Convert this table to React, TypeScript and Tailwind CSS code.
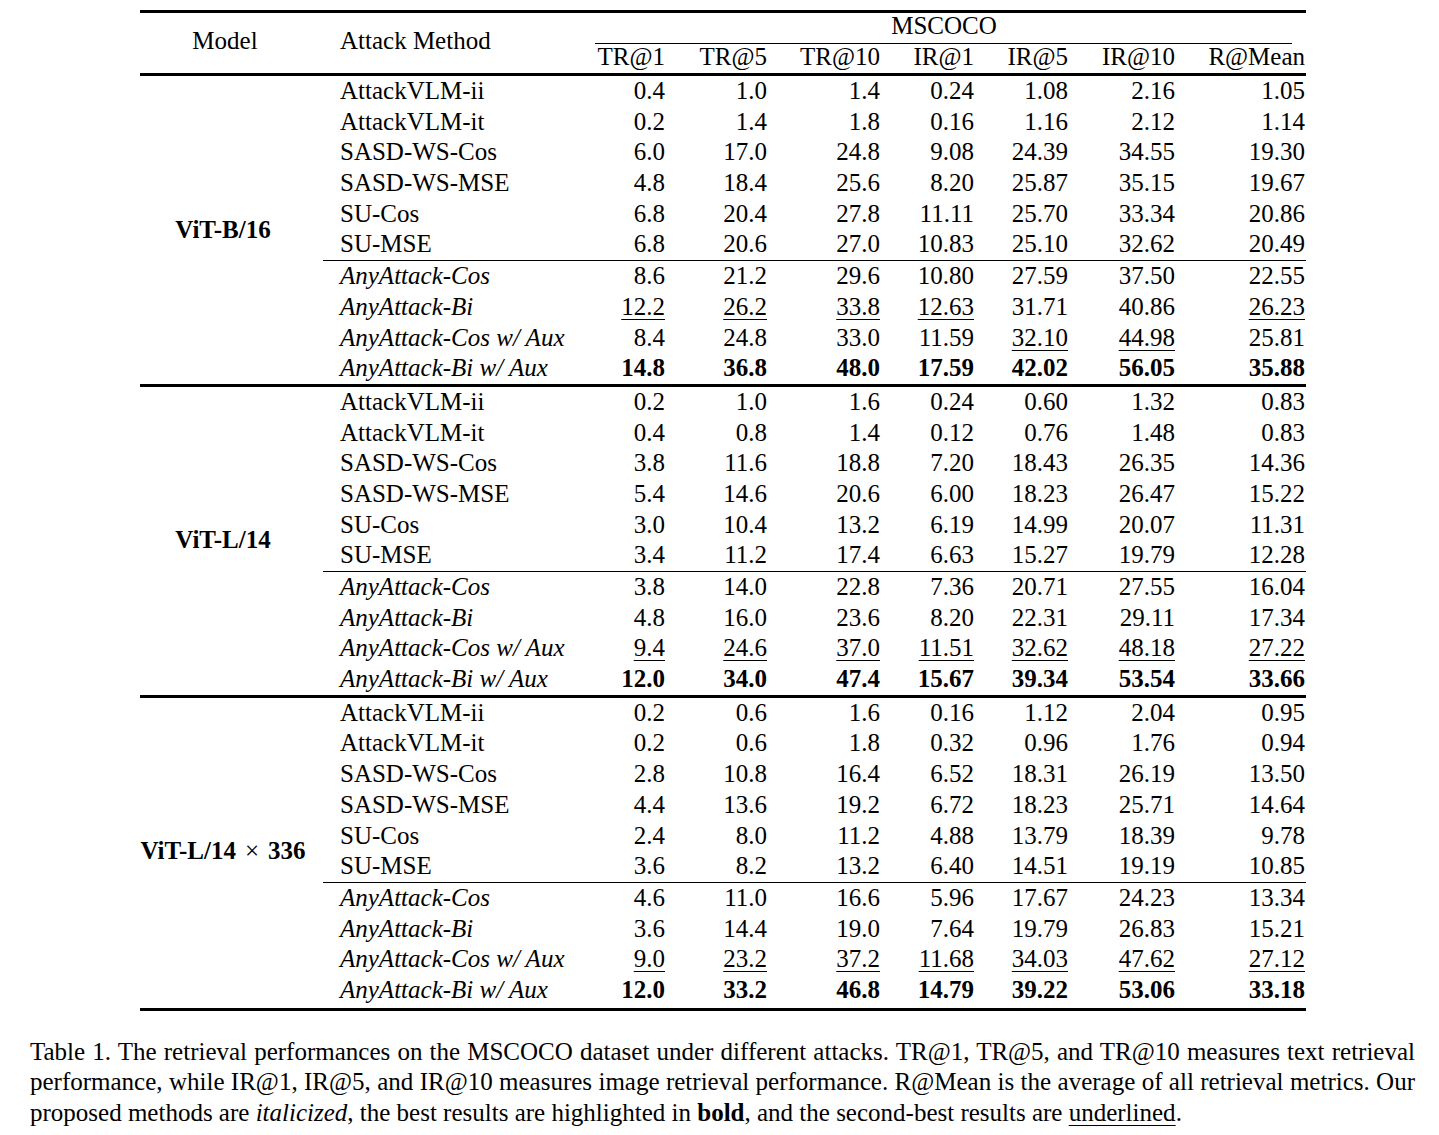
import React from "react";

type Cell = string;
type Row = { name: string; italic?: boolean; vals: Cell[] };
type Group = { model: React.ReactNode; rows: Row[] };

const widths = ["w-[100px] pr-[17px]", "w-[102px] pr-[17px]", "w-[113px] pr-[17px]", "w-[94px] pr-[17px]", "w-[94px] pr-[17px]", "w-[107px] pr-[17px]", "w-[114px] pr-[1px]"];

const g1: Row[] = [
  { name: "AttackVLM-ii", vals: ["0.4", "1.0", "1.4", "0.24", "1.08", "2.16", "1.05"] },
  { name: "AttackVLM-it", vals: ["0.2", "1.4", "1.8", "0.16", "1.16", "2.12", "1.14"] },
  { name: "SASD-WS-Cos", vals: ["6.0", "17.0", "24.8", "9.08", "24.39", "34.55", "19.30"] },
  { name: "SASD-WS-MSE", vals: ["4.8", "18.4", "25.6", "8.20", "25.87", "35.15", "19.67"] },
  { name: "SU-Cos", vals: ["6.8", "20.4", "27.8", "11.11", "25.70", "33.34", "20.86"] },
  { name: "SU-MSE", vals: ["6.8", "20.6", "27.0", "10.83", "25.10", "32.62", "20.49"] },
  { name: "AnyAttack-Cos", italic: true, vals: ["8.6", "21.2", "29.6", "10.80", "27.59", "37.50", "22.55"] },
  { name: "AnyAttack-Bi", italic: true, vals: ["_12.2", "_26.2", "_33.8", "_12.63", "31.71", "40.86", "_26.23"] },
  { name: "AnyAttack-Cos w/ Aux", italic: true, vals: ["8.4", "24.8", "33.0", "11.59", "_32.10", "_44.98", "25.81"] },
  { name: "AnyAttack-Bi w/ Aux", italic: true, vals: ["*14.8", "*36.8", "*48.0", "*17.59", "*42.02", "*56.05", "*35.88"] },
];

const g2: Row[] = [
  { name: "AttackVLM-ii", vals: ["0.2", "1.0", "1.6", "0.24", "0.60", "1.32", "0.83"] },
  { name: "AttackVLM-it", vals: ["0.4", "0.8", "1.4", "0.12", "0.76", "1.48", "0.83"] },
  { name: "SASD-WS-Cos", vals: ["3.8", "11.6", "18.8", "7.20", "18.43", "26.35", "14.36"] },
  { name: "SASD-WS-MSE", vals: ["5.4", "14.6", "20.6", "6.00", "18.23", "26.47", "15.22"] },
  { name: "SU-Cos", vals: ["3.0", "10.4", "13.2", "6.19", "14.99", "20.07", "11.31"] },
  { name: "SU-MSE", vals: ["3.4", "11.2", "17.4", "6.63", "15.27", "19.79", "12.28"] },
  { name: "AnyAttack-Cos", italic: true, vals: ["3.8", "14.0", "22.8", "7.36", "20.71", "27.55", "16.04"] },
  { name: "AnyAttack-Bi", italic: true, vals: ["4.8", "16.0", "23.6", "8.20", "22.31", "29.11", "17.34"] },
  { name: "AnyAttack-Cos w/ Aux", italic: true, vals: ["_9.4", "_24.6", "_37.0", "_11.51", "_32.62", "_48.18", "_27.22"] },
  { name: "AnyAttack-Bi w/ Aux", italic: true, vals: ["*12.0", "*34.0", "*47.4", "*15.67", "*39.34", "*53.54", "*33.66"] },
];

const g3: Row[] = [
  { name: "AttackVLM-ii", vals: ["0.2", "0.6", "1.6", "0.16", "1.12", "2.04", "0.95"] },
  { name: "AttackVLM-it", vals: ["0.2", "0.6", "1.8", "0.32", "0.96", "1.76", "0.94"] },
  { name: "SASD-WS-Cos", vals: ["2.8", "10.8", "16.4", "6.52", "18.31", "26.19", "13.50"] },
  { name: "SASD-WS-MSE", vals: ["4.4", "13.6", "19.2", "6.72", "18.23", "25.71", "14.64"] },
  { name: "SU-Cos", vals: ["2.4", "8.0", "11.2", "4.88", "13.79", "18.39", "9.78"] },
  { name: "SU-MSE", vals: ["3.6", "8.2", "13.2", "6.40", "14.51", "19.19", "10.85"] },
  { name: "AnyAttack-Cos", italic: true, vals: ["4.6", "11.0", "16.6", "5.96", "17.67", "24.23", "13.34"] },
  { name: "AnyAttack-Bi", italic: true, vals: ["3.6", "14.4", "19.0", "7.64", "19.79", "26.83", "15.21"] },
  { name: "AnyAttack-Cos w/ Aux", italic: true, vals: ["_9.0", "_23.2", "_37.2", "_11.68", "_34.03", "_47.62", "_27.12"] },
  { name: "AnyAttack-Bi w/ Aux", italic: true, vals: ["*12.0", "*33.2", "*46.8", "*14.79", "*39.22", "*53.06", "*33.18"] },
];

function Val({ v }: { v: string }) {
  if (v.startsWith("_")) {
    return <span className="underline decoration-1 underline-offset-[4px]">{v.slice(1)}</span>;
  }
  if (v.startsWith("*")) {
    return <span className="font-bold">{v.slice(1)}</span>;
  }
  return <span>{v}</span>;
}

function DataRow({ row }: { row: Row }) {
  return (
    <div className="flex h-[30.7px] items-center">
      <div className={`w-[259px] pl-[17px] whitespace-nowrap ${row.italic ? "italic" : ""}`}>{row.name}</div>
      {row.vals.map((v, i) => (
        <div key={i} className={`${widths[i]} text-right whitespace-nowrap`}>
          <Val v={v} />
        </div>
      ))}
    </div>
  );
}

function GroupBlock({ group }: { group: Group }) {
  return (
    <div className="flex">
      <div className="w-[183px] pr-[17px] flex items-center justify-center font-bold whitespace-nowrap">{group.model}</div>
      <div className="flex-1">
        {group.rows.slice(0, 6).map((r, i) => (
          <DataRow key={i} row={r} />
        ))}
        <div className="h-[1px] bg-black" />
        {group.rows.slice(6).map((r, i) => (
          <DataRow key={i} row={r} />
        ))}
      </div>
    </div>
  );
}

export default function App() {
  const headers = ["TR@1", "TR@5", "TR@10", "IR@1", "IR@5", "IR@10", "R@Mean"];
  const groups: Group[] = [
    { model: "ViT-B/16", rows: g1 },
    { model: "ViT-L/14", rows: g2 },
    {
      model: (
        <span>
          ViT-L/14<span className="font-normal mx-[9px]">×</span>336
        </span>
      ),
      rows: g3,
    },
  ];
  return (
    <div className="w-[1439px] min-h-[1135px] bg-white text-black font-['Liberation_Serif','Times_New_Roman',serif] text-[25px] leading-[30.7px] pt-[10px]">
      <div className="ml-[140px] w-[1166px]">
        <div className="h-[3px] bg-black" />
        <div className="flex h-[60px]">
          <div className="w-[183px] pr-[13px] flex items-center justify-center pb-[4px]">Model</div>
          <div className="w-[259px] pl-[17px] flex items-center pb-[4px]">Attack Method</div>
          <div className="flex-1 flex flex-col">
            <div className="h-[27px] flex items-center justify-center">MSCOCO</div>
            <div className="h-[1px] bg-black mt-[3px] ml-[13px] mr-[14px]" />
            <div className="flex h-[27px] items-center">
              {headers.map((h, i) => (
                <div key={i} className={`${widths[i]} text-right whitespace-nowrap`}>
                  {h}
                </div>
              ))}
            </div>
          </div>
        </div>
        {groups.map((g, i) => (
          <div key={i}>
            <div className="h-[3px] bg-black" />
            <GroupBlock group={g} />
          </div>
        ))}
        <div className="h-[3px] bg-black mt-[2px]" />
      </div>
      <div className="ml-[30px] w-[1385px] mt-[26px] text-[25px] leading-[30.5px]">
        <div className="text-justify [text-align-last:justify] whitespace-nowrap">
          Table 1. The retrieval performances on the MSCOCO dataset under different attacks. TR@1, TR@5, and TR@10 measures text retrieval
        </div>
        <div className="text-justify [text-align-last:justify] whitespace-nowrap">
          performance, while IR@1, IR@5, and IR@10 measures image retrieval performance. R@Mean is the average of all retrieval metrics. Our
        </div>
        <div className="whitespace-nowrap">
          proposed methods are <span className="italic">italicized</span>, the best results are highlighted in{" "}
          <span className="font-bold">bold</span>, and the second-best results are{" "}
          <span className="underline decoration-1 underline-offset-[4px]">underlined</span>.
        </div>
      </div>
    </div>
  );
}
